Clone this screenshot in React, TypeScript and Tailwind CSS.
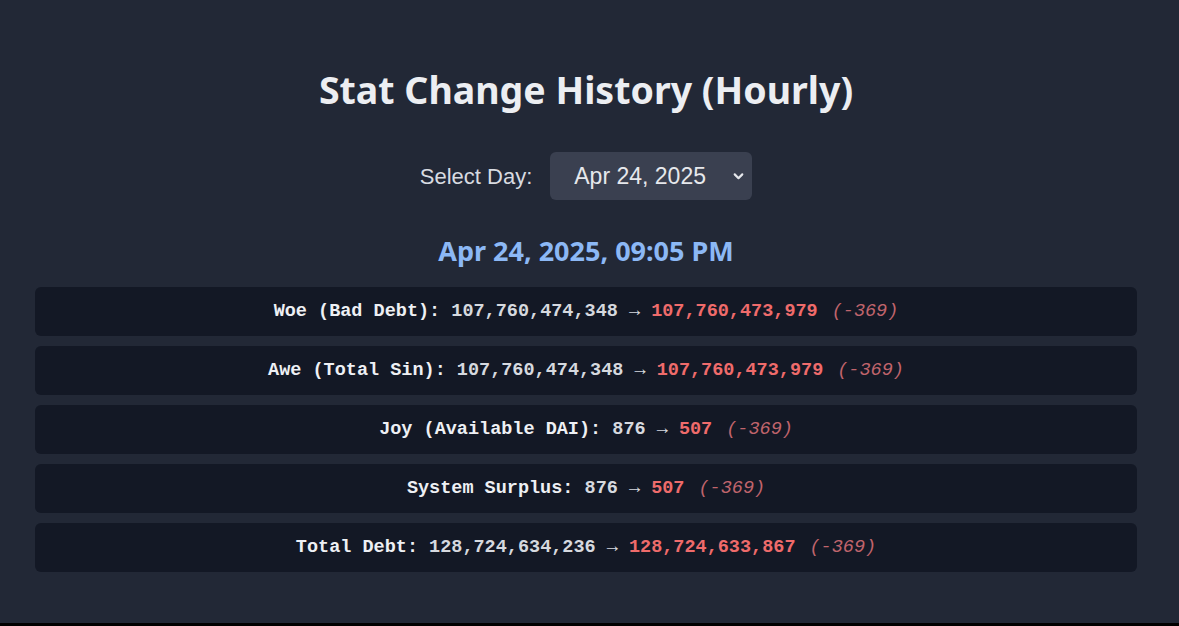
import React, { useState } from "react";

type Stat = {
  label: string;
  from: string;
  to: string;
  delta: string;
};

const stats: Stat[] = [
  { label: "Woe (Bad Debt)", from: "107,760,474,348", to: "107,760,473,979", delta: "-369" },
  { label: "Awe (Total Sin)", from: "107,760,474,348", to: "107,760,473,979", delta: "-369" },
  { label: "Joy (Available DAI)", from: "876", to: "507", delta: "-369" },
  { label: "System Surplus", from: "876", to: "507", delta: "-369" },
  { label: "Total Debt", from: "128,724,634,236", to: "128,724,633,867", delta: "-369" },
];

function StatRow({ stat }: { stat: Stat }) {
  return (
    <div className="h-[49px] flex items-center justify-center rounded-md bg-[#131825] font-['Liberation_Mono',monospace] text-[18.5px] leading-6 whitespace-pre">
      <span className="font-bold text-[#eef0f4]">{stat.label}:</span>
      <span className="font-bold text-[#d6d9df]"> {stat.from} → </span>
      <span className="font-bold text-[#ef6b6b]">{stat.to}</span>
      <span className="ml-[14px] italic text-[#c0646c]">({stat.delta})</span>
    </div>
  );
}

export default function App() {
  const [day, setDay] = useState("Apr 24, 2025");

  return (
    <div className="h-[626px] flex flex-col bg-black">
      <div className="h-[623px] bg-[#222836] pl-[35px] pr-[42px] pt-[66px]">
        <h1 className="text-center font-['Noto_Sans',sans-serif] text-[37.5px] leading-[48px] font-bold text-[#eceef2]">
          Stat Change History (Hourly)
        </h1>

        <div className="mt-[38px] flex items-center justify-center gap-[18px] font-['Liberation_Sans',sans-serif]">
          <label className="text-[22px] text-[#d8dbe1]">Select Day:</label>
          <div className="relative">
            <select
              value={day}
              onChange={(e) => setDay(e.target.value)}
              className="appearance-none h-[48px] w-[202px] rounded-md bg-[#3a4050] pl-6 pr-8 text-[23px] text-[#e6e8ec] outline-none"
            >
              <option>Apr 24, 2025</option>
              <option>Apr 23, 2025</option>
              <option>Apr 22, 2025</option>
            </select>
            <svg
              className="pointer-events-none absolute right-[7px] top-1/2 -translate-y-1/2"
              width="13"
              height="13"
              viewBox="0 0 24 24"
              fill="none"
              stroke="#e6e8ec"
              strokeWidth="4"
              strokeLinecap="round"
              strokeLinejoin="round"
            >
              <path d="M5 9l7 7 7-7" />
            </svg>
          </div>
        </div>

        <h2 className="mt-[35px] text-center font-['Noto_Sans',sans-serif] text-[27px] leading-8 font-bold text-[#8cb8f5]">
          Apr 24, 2025, 09:05 PM
        </h2>

        <div className="mt-[20px] flex flex-col gap-[10px]">
          {stats.map((s) => (
            <StatRow key={s.label} stat={s} />
          ))}
        </div>
      </div>
    </div>
  );
}
